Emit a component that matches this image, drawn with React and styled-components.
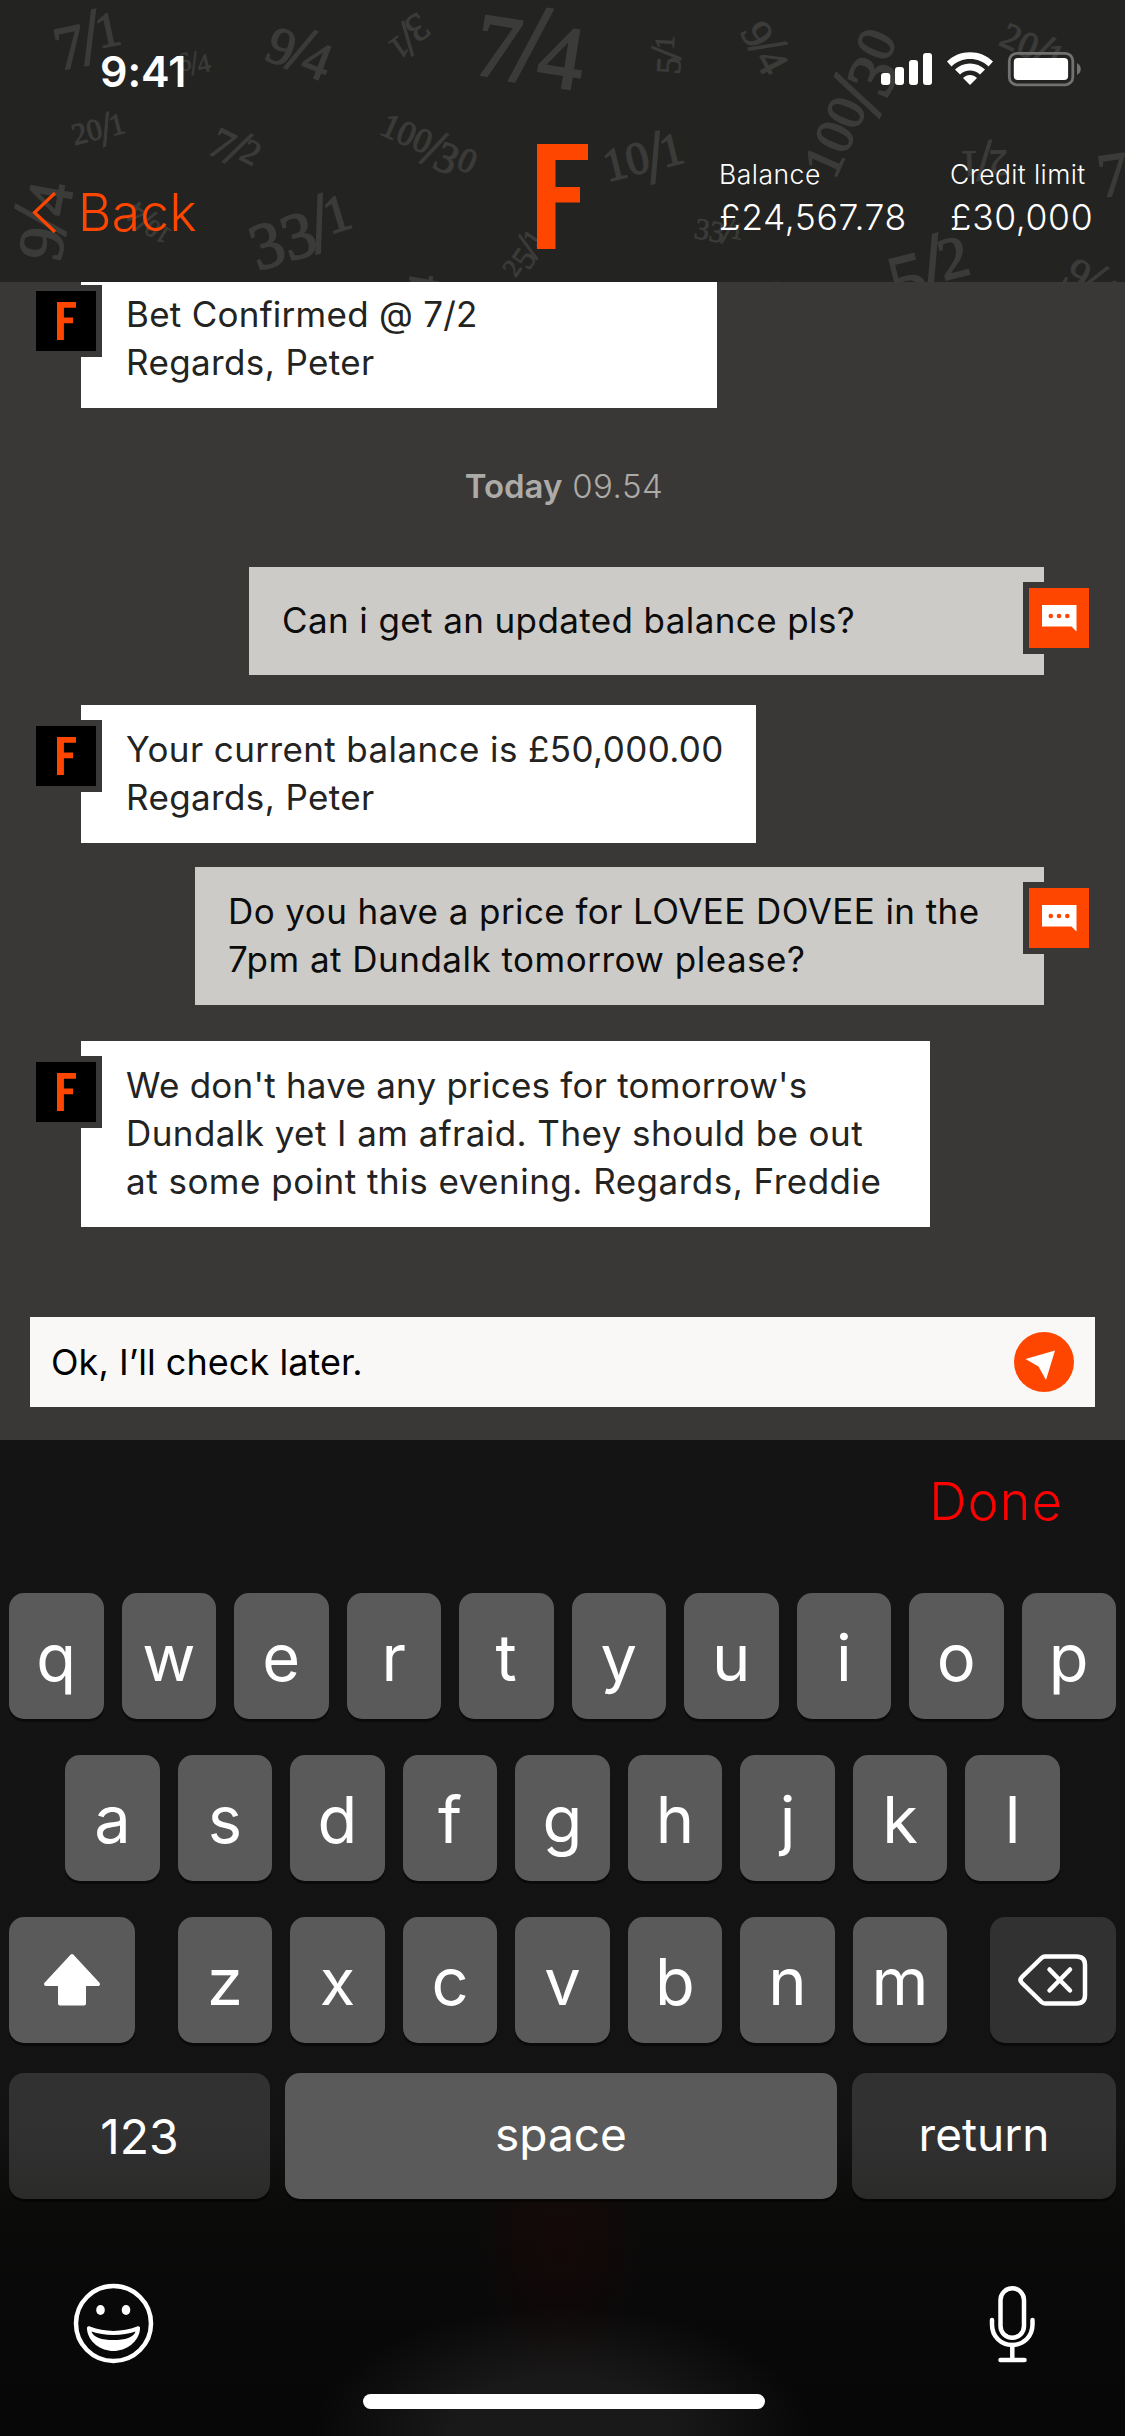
import React from "react";
import styled, { createGlobalStyle } from "styled-components";

const GlobalStyle = createGlobalStyle`
  html, body { margin: 0; padding: 0; background: #3a3836; }
  *, *::before, *::after { box-sizing: border-box; }
`;

const Screen = styled.div`
  width: 1125px;
  height: 2436px;
  overflow: hidden;
  display: flex;
  flex-direction: column;
  background: #3a3836;
  font-family: Inter, Roboto, "Liberation Sans", sans-serif;
`;

/* ---------- header ---------- */

const Header = styled.header`
  position: relative;
  z-index: 2;
  flex: none;
  height: 282px;
  overflow: hidden;
  background: #232321;
`;

const Pattern = styled.svg`
  position: absolute;
  inset: 0;
  fill: #3b3b39;
  stroke: #3b3b39;
  font-family: "Liberation Serif", serif;
`;

const StatusBar = styled.div`
  position: relative;
  display: flex;
  justify-content: space-between;
  align-items: flex-start;
  height: 132px;
  padding: 44px 43px 0 100px;
`;

const Clock = styled.span`
  font-size: 43px;
  line-height: 54px;
  font-weight: 600;
  letter-spacing: -0.1px;
  color: #fff;
`;

const StatusIcons = styled.svg`
  display: block;
  margin-top: 6px;
`;

const NavBar = styled.nav`
  position: relative;
  display: grid;
  grid-template-columns: 537px 51px 1fr;
  height: 150px;
`;

const Back = styled.a`
  display: flex;
  align-items: flex-start;
  padding: 60px 0 0 32px;
  color: #ff4600;
`;

const BackLabel = styled.span`
  margin: -11px 0 0 20px;
  font-size: 51.5px;
  line-height: 62px;
  font-weight: 300;
  letter-spacing: 0.3px;
`;

const LogoBox = styled.div`
  padding-top: 12px;
`;

const Accounts = styled.div`
  display: flex;
  padding: 26px 0 0 131px;
`;

const Account = styled.div`
  flex: none;
  width: ${(p) => p.$width}px;
  color: #fff;
  font-weight: 300;
  white-space: nowrap;
`;

const AccountLabel = styled.div`
  font-size: 26.5px;
  line-height: 32px;
  letter-spacing: ${(p) => p.$track}px;
`;

const AccountValue = styled.div`
  margin-top: 6px;
  font-size: 35.5px;
  line-height: 44px;
  letter-spacing: ${(p) => p.$track}px;
`;

/* ---------- chat ---------- */

const Chat = styled.main`
  flex: none;
  height: 1158px;
  display: flex;
  flex-direction: column;
`;

const Row = styled.div`
  display: flex;
  justify-content: ${(p) => (p.$mine ? "flex-end" : "flex-start")};
  margin-top: ${(p) => p.$gap}px;
  padding: 0 81px;
`;

const Bubble = styled.div`
  position: relative;
  width: ${(p) => p.$width}px;
  height: ${(p) => p.$height}px;
  padding: ${(p) => (p.$height === 108 ? 29 : 20)}px 0 0 ${(p) => (p.$mine ? 33 : 45)}px;
  background: ${(p) => (p.$mine ? "#cccbc7" : "#fff")};
  color: ${(p) => (p.$mine ? "#0c0c0c" : "#232321")};
`;

const Line = styled.p`
  margin: 0;
  font-size: 35px;
  line-height: 48px;
  white-space: nowrap;
  letter-spacing: ${(p) => p.$track}px;
`;

const Badge = styled.div`
  position: absolute;
  top: 15px;
  ${(p) => (p.$mine ? "right: -51px;" : "left: -51px;")}
  width: 72px;
  height: 72px;
  border: 6px solid #3a3836;
  background: ${(p) => (p.$mine ? "#ff4600" : "#000")};
`;

const Stamp = styled.div`
  margin-top: 54px;
  height: 48px;
  padding-left: 3px;
  text-align: center;
  font-size: 33px;
  line-height: 48px;
  font-weight: 300;
  color: #adaba8;
  letter-spacing: 0.5px;
  b { font-weight: 600; letter-spacing: 0; }
`;

const Composer = styled.div`
  display: flex;
  align-items: center;
  justify-content: space-between;
  margin: 90px 30px 0;
  height: 90px;
  padding: 0 21px;
  background: #f9f8f7;
  color: #000;
`;

const Draft = styled.span`
  margin-top: -1px;
  font-size: 36px;
  line-height: 44px;
  letter-spacing: 0.05px;
`;

/* ---------- keyboard ---------- */

const Keyboard = styled.section`
  flex: none;
  height: 996px;
  display: flex;
  flex-direction: column;
  background:
    radial-gradient(ellipse 90px 150px at 560px 800px, rgba(60, 0, 0, 0.2), rgba(60, 0, 0, 0) 100%),
    radial-gradient(ellipse 250px 130px at 562px 996px, rgba(255, 255, 255, 0.07) 45%, rgba(255, 255, 255, 0) 100%),
    linear-gradient(#141414 0, #131313 690px, #0b0b0a 765px, #090909 850px, #070707 996px);
`;

const Accessory = styled.div`
  height: 153px;
  padding: 31px 62px 0 0;
  text-align: right;
  font-size: 52px;
  line-height: 62px;
  font-weight: 300;
  letter-spacing: 1.2px;
  color: #ff0000;
`;

const KeyRow = styled.div`
  display: flex;
  justify-content: ${(p) => (p.$spread ? "space-between" : "center")};
  gap: ${(p) => (p.$spread ? 0 : 18)}px;
  margin-bottom: ${(p) => p.$below ?? 36}px;
  padding: 0 9px;
`;

const LetterGroup = styled.div`
  display: flex;
  gap: 18px;
`;

const Key = styled.button`
  flex: none;
  display: flex;
  align-items: center;
  justify-content: center;
  width: ${(p) => p.$width ?? 94.5}px;
  height: 126px;
  padding: ${(p) => p.$drop ?? 3}px 0 ${(p) => p.$lift ?? 0}px;
  border: 0;
  border-radius: 15px;
  background: ${(p) => (p.$dark ? "rgba(255,255,255,0.13)" : "#5a5a5a")};
  box-shadow: 0 3px 0 rgba(0, 0, 0, 0.45);
  color: #fff;
  font-family: inherit;
  font-size: ${(p) => p.$size ?? 65}px;
  font-weight: 400;
`;

const BottomBar = styled.div`
  display: flex;
  justify-content: space-between;
  padding: 84px 89px 0 73px;
`;

const HomeIndicator = styled.div`
  width: 402px;
  height: 15px;
  margin: 30px 0 0 363px;
  border-radius: 7.5px;
  background: #fff;
`;

/* Odds scattered behind the header; x and y locate the slash. */
const ODDS = [
  ["7", "1", 90, 37, -12, 66],
  ["6", "4", 194, 63, -12, 28],
  ["9", "4", 301, 49, 21, 57],
  ["3", "1", 408, 39, 145, 42],
  ["7", "4", 531, 44, 9, 96],
  ["20", "1", 106, 129, -14, 41],
  ["7", "2", 238, 148, 27, 47],
  ["100", "30", 434, 148, 24, 47],
  ["9", "4", 40, 220, -80, 68],
  ["10", "4", 145, 222, 212, 34],
  ["33", "1", 319, 223, -17, 70],
  ["9", "4", 416, 300, -80, 46],
  ["25", "1", 528, 247, -56, 35],
  ["5", "1", 666, 53, -87, 37],
  ["9", "4", 768, 46, 62, 46],
  ["100", "30", 857, 95, -66, 72],
  ["20", "1", 1040, 53, 25, 50],
  ["10", "1", 655, 157, -14, 62],
  ["2", "1", 984, 161, 178, 50],
  ["7", "1", 1134, 166, -8, 66],
  ["33", "1", 728, 231, 10, 32],
  ["5", "2", 932, 267, -14, 80],
  ["9", "4", 1093, 279, 33, 46],
  ["9", "1", 769, 297, 6, 40],
];

/* Old-style figures: 0, 1 and 2 sit at x-height, the rest descend. */
const figureStyle = (ch, size) => {
  if ("012".includes(ch)) return { size: size * 0.74, drop: 0 };
  if ("68".includes(ch)) return { size: size * 0.94, drop: 0 };
  return { size: size * 0.94, drop: size * 0.2 };
};

function Figures({ text, size, x, anchor }) {
  let prev = 0;
  return (
    <text x={x} y={size * 0.2} textAnchor={anchor}>
      {text.split("").map((ch, i) => {
        const f = figureStyle(ch, size);
        const dy = f.drop - prev;
        prev = f.drop;
        return (
          <tspan key={i} dy={dy} fontSize={f.size}>
            {ch}
          </tspan>
        );
      })}
    </text>
  );
}

function OddsPattern() {
  return (
    <Pattern width="1125" height="282" viewBox="0 0 1125 282" aria-hidden="true">
      {ODDS.map(([a, b, x, y, angle, size], i) => (
        <g key={i} transform={`translate(${x} ${y}) rotate(${angle})`} strokeWidth={size * 0.024}>
          <Figures text={a} size={size} x={-size * 0.1} anchor="end" />
          <text x="0" y={size * 0.4} fontSize={size * 1.2} textAnchor="middle">
            /
          </text>
          <Figures text={b} size={size} x={size * 0.1} anchor="start" />
        </g>
      ))}
    </Pattern>
  );
}

const Mark = styled.svg`
  display: block;
`;

const FMark = ({ width, height }) => (
  <Mark width={width} height={height} viewBox="0 0 51 105" preserveAspectRatio="none">
    <path d="M0 0H51V16H18.500V43H43V58.500H18.500V105H0Z" fill="#ff4600" />
  </Mark>
);

const AgentMark = styled.div`
  display: flex;
  padding: 11px 0 0 21px;
`;

const AgentBadge = () => (
  <Badge>
    <AgentMark>
      <FMark width={19} height={38} />
    </AgentMark>
  </Badge>
);

const MyBadge = () => (
  <Badge $mine>
    <Mark width="60" height="60" viewBox="0 0 60 60">
      <path d="M13 17H47.500V43.500L42.500 38.500H13Z" fill="#fff" />
      <g fill="#ff4600">
        <circle cx="21.800" cy="28" r="2.300" />
        <circle cx="30" cy="28" r="2.300" />
        <circle cx="38.300" cy="28" r="2.300" />
      </g>
    </Mark>
  </Badge>
);

function Message({ mine, gap, width, height, lines }) {
  return (
    <Row $mine={mine} $gap={gap}>
      <Bubble $mine={mine} $width={width} $height={height}>
        {lines.map(([text, track]) => (
          <Line key={text} $track={track}>
            {text}
          </Line>
        ))}
        {mine ? <MyBadge /> : <AgentBadge />}
      </Bubble>
    </Row>
  );
}

const Letters = ({ keys }) => keys.split("").map((k) => <Key key={k}>{k}</Key>);

export default function App() {
  return (
    <Screen>
      <GlobalStyle />
      <Header>
        <OddsPattern />
        <StatusBar>
          <Clock>9:41</Clock>
          <StatusIcons width="202" height="38" viewBox="880 50 202 38" fill="#fff">
            <rect x="881" y="73" width="9.300" height="12" rx="3" />
            <rect x="895" y="67" width="9" height="18" rx="3" />
            <rect x="909" y="60" width="9" height="25" rx="3" />
            <rect x="923" y="53" width="9" height="32" rx="3" />
            <path d="M947 61.500C959 49 981 49 993 61.500L988.500 66.500C979 56.500 961 56.500 951.500 66.500Z" />
            <path d="M955 69.500C963 61.500 977 61.500 985 69.500L980 74.500C974.500 69 965.500 69 960 74.500Z" />
            <path d="M963 78C967 74 973 74 977 78L970 85Z" />
            <rect x="1009.300" y="53.300" width="63.500" height="31.500" rx="7.500" fill="none" stroke="#71716f" strokeWidth="2.800" />
            <rect x="1013.800" y="58" width="54.300" height="22" rx="4" />
            <path d="M1077 63C1082 65.500 1082 72.500 1077 75Z" fill="#71716f" />
          </StatusIcons>
        </StatusBar>
        <NavBar>
          <Back>
            <svg width="26" height="42" viewBox="0 0 26 42" fill="none" stroke="#ff4600" strokeWidth="3.200">
              <path d="M23 1L2.500 20.500L23 40" />
            </svg>
            <BackLabel>Back</BackLabel>
          </Back>
          <LogoBox>
            <FMark width={51} height={105} />
          </LogoBox>
          <Accounts>
            <Account $width={231}>
              <AccountLabel $track={0.5}>Balance</AccountLabel>
              <AccountValue $track={0.6}>£24,567.78</AccountValue>
            </Account>
            <Account $width={160}>
              <AccountLabel $track={0.4}>Credit limit</AccountLabel>
              <AccountValue $track={0.6}>£30,000</AccountValue>
            </Account>
          </Accounts>
        </NavBar>
      </Header>

      <Chat>
        <Message
          gap={-12}
          width={636}
          height={138}
          lines={[
            ["Bet Confirmed @ 7/2", 0.26],
            ["Regards, Peter", 0.38],
          ]}
        />
        <Stamp>
          <b>Today</b> 09.54
        </Stamp>
        <Message mine gap={57} width={795} height={108} lines={[["Can i get an updated balance pls?", 0.39]]} />
        <Message
          gap={30}
          width={675}
          height={138}
          lines={[
            ["Your current balance is £50,000.00", 0.4],
            ["Regards, Peter", 0.38],
          ]}
        />
        <Message
          mine
          gap={24}
          width={849}
          height={138}
          lines={[
            ["Do you have a price for LOVEE DOVEE in the", 0.42],
            ["7pm at Dundalk tomorrow please?", 0.49],
          ]}
        />
        <Message
          gap={36}
          width={849}
          height={186}
          lines={[
            ["We don't have any prices for tomorrow's", 0.23],
            ["Dundalk yet I am afraid. They should be out", 0.43],
            ["at some point this evening. Regards, Freddie", 0.49],
          ]}
        />
        <Composer>
          <Draft>Ok, I’ll check later.</Draft>
          <svg width="60" height="60" viewBox="0 0 60 60">
            <circle cx="30" cy="30" r="30" fill="#ff4600" />
            <path d="M11.500 27L41 18.500L32 48L24.500 34.500Z" fill="#fff" />
          </svg>
        </Composer>
      </Chat>

      <Keyboard>
        <Accessory>Done</Accessory>
        <KeyRow>
          <Letters keys="qwertyuiop" />
        </KeyRow>
        <KeyRow>
          <Letters keys="asdfghjkl" />
        </KeyRow>
        <KeyRow $spread $below={30}>
          <Key $width={126} $drop={0}>
            <svg width="58" height="54" viewBox="0 0 58 54" fill="#fff" stroke="#fff" strokeWidth="4" strokeLinejoin="round">
              <path d="M29 3L55 31H41V50.500H17V31H3Z" />
            </svg>
          </Key>
          <LetterGroup>
            <Letters keys="zxcvbnm" />
          </LetterGroup>
          <Key $width={126} $dark $drop={0}>
            <svg width="70" height="52" viewBox="0 0 70 52" fill="none" stroke="#fff" strokeWidth="4.500" strokeLinecap="round" strokeLinejoin="round">
              <path d="M27 2.500H58.500Q67 2.500 67 11V41Q67 49.500 58.500 49.500H27Q25 49.500 23.500 48L4 29Q1 26 4 23L23.500 4Q25 2.500 27 2.500Z" />
              <path d="M31.500 15.500L52 36.500M52 15.500L31.500 36.500" />
            </svg>
          </Key>
        </KeyRow>
        <KeyRow $spread $below={0}>
          <Key $width={261} $dark $drop={0} $size={48}>123</Key>
          <Key $width={552} $drop={0} $lift={4} $size={46}>space</Key>
          <Key $width={264} $dark $drop={0} $lift={4} $size={46}>return</Key>
        </KeyRow>
        <BottomBar>
          <svg width="81" height="81" viewBox="0 0 81 81">
            <circle cx="40.500" cy="40.500" r="37.500" fill="none" stroke="#fff" strokeWidth="4.500" />
            <ellipse cx="27.500" cy="27" rx="4.300" ry="5" fill="#fff" />
            <ellipse cx="53" cy="27" rx="4.300" ry="5" fill="#fff" />
            <path
              fillRule="evenodd"
              fill="#fff"
              d="M14 46C13.500 43.500 15.500 42.800 17.500 43.800C31 49.300 50 49.300 63.500 43.800C65.500 42.800 67.500 43.500 67 46C66 59 53 68 40.500 68C28 68 15 59 14 46ZM18.500 48.500C20 54.500 29 57 40.500 57C52 57 61 54.500 62.500 48.500C50 53 31 53 18.500 48.500Z"
            />
          </svg>
          <svg width="48" height="81" viewBox="0 -3 48 81" fill="none" stroke="#fff" strokeWidth="4.500" strokeLinecap="round">
            <rect x="12.500" y="2.300" width="23.500" height="49.500" rx="11.750" />
            <path d="M4 34V38.500C4 50.500 13 59 24.300 59C35.500 59 44.500 50.500 44.500 38.500V34" />
            <path d="M24.300 59V73.500M12.500 74H36.500" />
          </svg>
        </BottomBar>
        <HomeIndicator />
      </Keyboard>
    </Screen>
  );
}
